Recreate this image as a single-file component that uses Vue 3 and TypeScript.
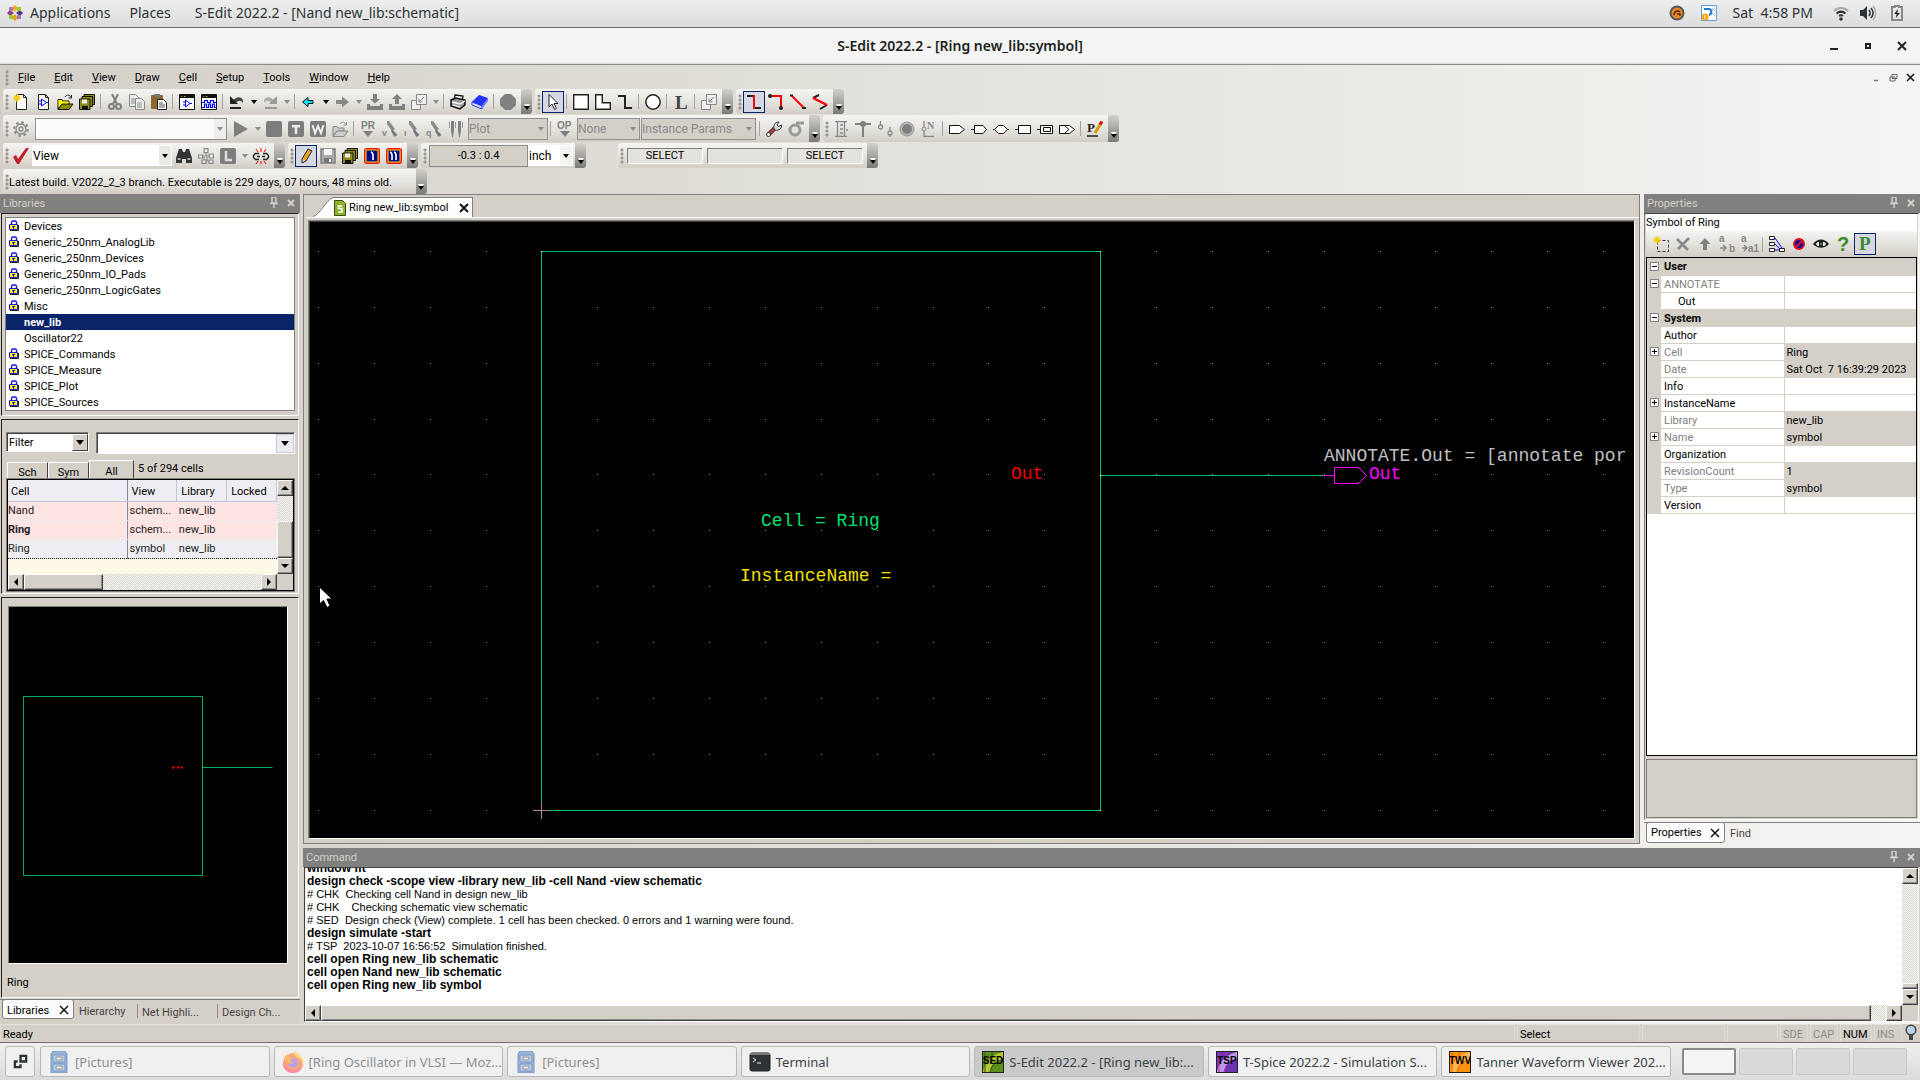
<script setup lang="ts">
import { computed, ref } from 'vue'

interface Item {
  kind: 'icon' | 'sep' | 'arrow' | 'combo' | 'field'
  icon?: string
  label?: string
  active?: boolean
  dim?: boolean
  size?: string
}
interface Bar { id: string; cls?: string; items: Item[] }

const i = (icon: string, label: string, active = false): Item => ({ kind: 'icon', icon, label, active })
const sep: Item = { kind: 'sep' }
const arr: Item = { kind: 'arrow', dim: true }
const arrOn: Item = { kind: 'arrow' }
const combo = (label: string, size: string, dim = false): Item => ({ kind: 'combo', label, size, dim })
const field = (label: string, size: string): Item => ({ kind: 'field', label, size })

const page = '<path d="M3.500.5h7l3 3v12h-10z" fill="#fff" stroke="#222"/><path d="M10.500.5v3h3" fill="none" stroke="#222"/>'
const buf = '<path d="M6.500 5v7l5-3.500z" fill="none" stroke="#00f"/><path d="M4 7h2M4 10h2M11.500 8.500h2" stroke="#00f"/>'
const star = '<path d="M4 0v8M0 4h8M1.500 1.500l5 5M6.500 1.500l-5 5" stroke="#f6d000" stroke-width="1.400"/>'
const floppies = '<path d="M5 .5h10.500v10H5z" fill="#8c8c1c" stroke="#111"/><path d="M3 2.500h10.500v10H3z" fill="#8c8c1c" stroke="#111"/><path d="M.5 5h10.500v10.500H.5z" fill="#8c8c1c" stroke="#111"/><path d="M3 5.500h5v4H3z" fill="#eee"/><path d="M3 12h6v3H3z" fill="#111"/>'
const win = '<path d="M.5.5h15v15H.5z" fill="#fff" stroke="#111"/><path d="M1 1h14v3H1z" fill="#111"/><path d="M2 2h1.500v1H2z" fill="#f33"/><path d="M5 2h1.500v1H5z" fill="#3e3"/>'
const folder = '<path d="M1 5.500h4l1 1.500h6v3H5l-4 5z"/><path d="M5 10h11l-4 5.500H1z"/>'
const probe = (c: string) => `<path d="M5 0l2 0 6 8-3 2-5-7z" fill="#8a8a8a"/><path d="M10 8l5.500 6-3 2-3.500-6z" fill="#777"/><text x="0" y="15" font-size="9" font-weight="bold" fill="#888" font-family="Liberation Sans, sans-serif">${c}</text>`
const tile = '<rect width="16" height="16" rx="2" fill="#7d7d7d"/>'
const lib = '<rect x=".7" y=".7" width="14.600" height="14.600" rx="2" fill="#fbe100" stroke="#f01010" stroke-width="1.400"/><rect x="2.500" y="2.500" width="11" height="11" fill="#000a8c"/>'
const txt = (s: string, x: number, y: number, size: number, fill: string, fam = 'Liberation Sans') =>
  `<text x="${x}" y="${y}" font-size="${size}" font-weight="bold" fill="${fill}" font-family="${fam}, sans-serif">${s}</text>`

const icons: Record<string, string> = {
  newDoc: page + star,
  newCell: page + buf,
  open: '<g fill="#8c8c00" stroke="#111">' + folder + '</g><path d="M1.500 6h3l1 1.500h6v2H5l-3.500 4z" fill="#ff0"/><path d="M8 3c2-3 5-2 6 .500M14.500 1v3h-3" fill="none" stroke="#222"/>',
  saveAll: floppies,
  cut: '<path d="M5 0l5 10M11 0L6 10" stroke="#808080" stroke-width="2"/><circle cx="4.500" cy="12.500" r="2.500" fill="none" stroke="#808080" stroke-width="2"/><circle cx="11.500" cy="12.500" r="2.500" fill="none" stroke="#808080" stroke-width="2"/>',
  copy: '<g fill="#eee" stroke="#8a8a8a"><path d="M.5.5h6l3 3v9h-9z"/><path d="M6.500 4.500h6l3 3v8h-9z"/></g><path d="M2 5h4M2 7h4M2 9h4M8 9h5M8 11h5M8 13h5" stroke="#8a8a8a"/>',
  paste: '<rect y="1" width="12" height="14" rx="1" fill="#8d6630"/><rect x="3" width="6" height="3" fill="#777"/><path d="M6.500 5.500h6l3 3v7h-9z" fill="#fff" stroke="#222"/><path d="M8 9h4M8 11h6M8 13h6" stroke="#555"/>',
  schem: win + '<path d="M6.500 6v7l4.500-3.500z" fill="none" stroke="#00f"/><path d="M4 8h2M4 11h2M11 9.500h2" stroke="#00f"/>',
  wave: win + '<path d="M1 8.500h2.500v-2h3v2h3v-2h3v2h2.500M1 13.500h2.500v-3.500h2v3.500h2v-3.500h2v3.500h2v-3.500h2v3.500h1.500" fill="none" stroke="#00f" stroke-width="1.200"/>',
  undo: '<path d="M4 7c3-5 9-5 10 0v2c-2-3-5-3-7 0z" fill="#444"/><path d="M1 2v8h8z" fill="#222"/><path d="M1 14h11" stroke="#222" stroke-width="2"/>',
  redo: '<path d="M12 7c-3-5-9-5-10 0v2c2-3 5-3 7 0z" fill="#aaa"/><path d="M15 2v8H7z" fill="#999"/><path d="M3 14h12" stroke="#999" stroke-width="2"/>',
  back: '<path d="M1.500 8l5.500-4.500v3h5v3H7v3z" fill="#00e5ff" stroke="#111"/>',
  fwd: '<path d="M15 8L8 2.500v3.500H2v4h6v3.500z" fill="#888"/>',
  down: '<path d="M6 0h4v5h3L8 9.500 3 5h3z" fill="#808080"/><path d="M0 10h3v2h10v-2h3v6H0z" fill="#808080"/>',
  up: '<path d="M6 10h4V5h3L8 0 3 5h3z" fill="#808080"/><path d="M0 10h3v2h10v-2h3v6H0z" fill="#808080"/>',
  instance: '<g fill="#eee" stroke="#888"><path d="M.5 6.500h9v9h-9z"/><path d="M5.500.5h10v10h-10z"/></g><path d="M13 3l-5 5M8 4.500V8h3.500" stroke="#888" fill="none"/>',
  print: '<path d="M5 1l8 1-1 5H4z" fill="#fff" stroke="#111" stroke-width="1.300"/><path d="M1 6l5-2 9 2v5l-5 4-9-3z" fill="#999" stroke="#111" stroke-width="1.500"/><path d="M2 8l8 2 5-3M3 11l7 2" stroke="#fff" fill="none" stroke-width="1.300"/>',
  book: '<path d="M7 1l9 3-6 8-10-4z" fill="#2233f5"/><path d="M0 8l10 4v3L0 11z" fill="#e6e6ff" stroke="#2233f5"/><path d="M10 12l6-8v3l-6 8z" fill="#6c78ff"/>',
  octagon: '<path d="M5 0h6l5 5v6l-5 5H5l-5-5V5z" fill="#808080"/>',
  cursor: '<path d="M4 .500v12.500l3-3 2.500 5.500 2-1L9 9.500h4z" fill="#fff" stroke="#222"/>',
  rect: '<path d="M.7.7h14.600v14.600H.7z" fill="#fff" stroke="#222" stroke-width="1.400"/>',
  poly: '<path d="M.7.7h6.600v8h8v6.600H.7z" fill="#fff" stroke="#222" stroke-width="1.400"/>',
  wire: '<path d="M1 2h7v12h7" fill="none" stroke="#222" stroke-width="2"/>',
  oval: '<circle cx="8" cy="8" r="7.200" fill="#fff" stroke="#222" stroke-width="1.500"/>',
  text: txt('L', 2, 15, 19, '#444', 'Liberation Serif'),
  wireZ: '<path d="M1 2h6M9 14h6" stroke="#222" stroke-width="2"/><path d="M8 1v14" stroke="#f00" stroke-width="2"/>',
  wireL: '<path d="M2 2h11v12" fill="none" stroke="#f00" stroke-width="2"/><circle cx="2" cy="2" r="2" fill="#222"/><circle cx="13" cy="14" r="2" fill="#222"/>',
  wireD: '<path d="M2 2l12 12" stroke="#f00" stroke-width="2"/><path d="M0 1.500h3M12 14h4" stroke="#222" stroke-width="2"/>',
  wireA: '<path d="M7 1L1 4M15 11l-7 4" stroke="#222" fill="none" stroke-width="2"/><path d="M1 4l14 7" stroke="#f00" stroke-width="2.500"/>',
  gear: '<circle cx="8" cy="8" r="5" fill="none" stroke="#8a8a8a" stroke-width="1.300"/><circle cx="8" cy="8" r="2" fill="none" stroke="#8a8a8a" stroke-width="1.300"/><circle cx="8" cy="8" r="6.700" fill="none" stroke="#8a8a8a" stroke-width="2.200" stroke-dasharray="2.600 2.660"/>',
  play: '<path d="M1 0l14 8-14 8z" fill="#808080"/>',
  stop: tile,
  tileT: tile + '<path d="M4 4h8v2.500H9.300V13H6.700V6.500H4z" fill="#eee"/>',
  tileW: tile + '<path d="M2.500 4L5 12l3-7 3 7 2.500-8" fill="none" stroke="#eee" stroke-width="2"/>',
  tileL: tile + '<path d="M6 3v9h6" fill="none" stroke="#ddd" stroke-width="2.500"/>',
  openOff: '<g fill="#ccc" stroke="#888">' + folder + '</g><path d="M8 3c2-3 5-2 6 .500M14.500 1v3h-3" fill="none" stroke="#888"/>',
  pr: txt('PR', 1, 8, 10, '#808080') + '<path d="M3 10h10l-5 6z" fill="#808080"/>',
  op: txt('OP', 0, 8, 10, '#808080') + '<path d="M3 10h10l-5 6z" fill="#808080"/>',
  probeV: probe('v'), probeI: probe('ı'), probeQ: probe('q'),
  forks: '<path d="M3 0h3v9l-1 7H4L3 9zM10 0h3v9l-1 7h-1l-1-7z" fill="#808080"/><path d="M1.500 1v6M7.500 1v6M14.500 1v6" stroke="#999"/>',
  wrench: '<path d="M3 13l6-6" stroke="#333" stroke-width="4.500"/><path d="M3 13l6-6" stroke="#c23848" stroke-width="2.500"/><path d="M8 8c-1-5 2-7 5-7l-2 3 1.500 1.500L15.500 4c1 3-3 6-6 5z" fill="#ddd" stroke="#333"/><circle cx="2.500" cy="13.500" r="2" fill="#fff" stroke="#333"/>',
  sigma: '<path d="M16 2H8" stroke="#999" stroke-width="3"/><circle cx="7" cy="9" r="5" fill="none" stroke="#999" stroke-width="3"/>',
  sheet: '<path d="M2 .7h12M2 15.300h12M4.500 1v14M11.500 1v14M7 4h3M7 8h3M7 12h3M13 9h2" stroke="#888" stroke-width="1.300"/>',
  tee: '<path d="M0 3h16M8 3v13" stroke="#808080" stroke-width="2"/><circle cx="8" cy="3" r="3" fill="#808080"/>',
  net: '<g fill="none" stroke="#888" stroke-width="1.300"><circle cx="3.500" cy="6" r="2"/><circle cx="13" cy="12" r="2"/><path d="M3.500 4V0M13 10V6M13 14v2"/></g>',
  disc: '<circle cx="8" cy="8" r="7" fill="#b8b8b8" stroke="#999"/><circle cx="8" cy="8" r="5" fill="#808080"/>',
  nlabel: txt('N', 6, 8, 10, '#888', 'Liberation Serif') + '<path d="M3 0v15.300h10" fill="none" stroke="#888" stroke-width="1.300"/><circle cx="3" cy="8" r="2" fill="#ddd" stroke="#888"/>',
  portA: '<path d="M.5 4.500h10l5 4-5 4H.5z" fill="#fff" stroke="#111"/>',
  portB: '<path d="M0 8.500h3M15.500 8.500L12 4.500H3.500v8H12z" fill="#fff" stroke="#111"/>',
  portC: '<path d="M0 8.500h16" stroke="#111"/><path d="M1.500 8.500l4-4h5l4 4-4 4h-5z" fill="#fff" stroke="#111"/>',
  portD: '<path d="M0 8.500h4M3.500 4.500h12v8h-12z" fill="#fff" stroke="#111"/>',
  portE: '<path d="M0 8.500h4M3.500 4.500h12v8h-12zM6.500 6.500h7v4h-7z" fill="#fff" stroke="#111"/>',
  portF: '<path d="M.5 4.500h10l5 4-5 4H.5z" fill="#fff" stroke="#111"/><path d="M6 5l4 3.500L6 12" fill="none" stroke="#111"/>',
  pEdit: txt('P', 0, 11, 13, '#222', 'Liberation Serif') + '<path d="M14 2L8 12" stroke="#d99a00" stroke-width="3"/><path d="M15 .500l-2 3" stroke="#d00" stroke-width="3"/><path d="M0 15h11" stroke="#222" stroke-width="1.500"/>',
  check: '<path d="M0 9l3-2 2 4L13 0h3L6 16H4z" fill="#c41e2e"/>',
  binoc: '<path d="M3 1h3l1 3h2l1-3h3l3 9v5h-6v-4H6v4H0v-5z" fill="#333"/><path d="M1.500 11h3M11.500 11h3" stroke="#aaa" stroke-width="2"/>',
  tree: '<g fill="#eee" stroke="#888" stroke-width="1.200"><path d="M6 .6h4v4H6zM.6 7h4v3h-4zM11.400 6h4v4h-4zM4 12h4v3.400H4zM11 12h4v3.400h-4z"/></g><path d="M8 5v3M5 8h6M6 9v3M9 9v4h2" fill="none" stroke="#888" stroke-width="1.200"/>',
  unlink: '<path d="M6 5.500H2.500l-2 2v2l2 2H6M10 5.500h3.500l2 2v2l-2 2H10M4 8.500h3M9 8.500h3" fill="none" stroke="#222" stroke-width="1.400"/><path d="M8 0v4M3 1l2 3M13 1l-2 3M8 13v3M5 13l-2 3M11 13l2 3" stroke="#f00"/>',
  pencil: '<path d="M12 2L6 12" stroke="#e8a51c" stroke-width="4"/><path d="M10 1L4 11l0 4 4-2 6-10z" fill="none" stroke="#222"/>',
  save: '<path d="M1 1h14v14H1z" fill="#aaa" stroke="#808080" stroke-width="1.500"/><path d="M4 1h8v6H4z" fill="#f4f4f4"/><path d="M4 10h8v5H4z" fill="#777"/><path d="M9 11h2v3H9z" fill="#eee"/>',
  lib1: lib + '<path d="M7 4c3 1 2 4 2 8" stroke="#fff" stroke-width="1.700" fill="none"/>',
  lib2: lib + '<path d="M4 4c3 1 2 4 2 8M8 4c3 1 2 4 2 8" stroke="#fff" stroke-width="1.700" fill="none"/>',
  lock: '<path d="M2.500 4V2l1-1h3l1 1v2" fill="none" stroke="#1a1ae0" stroke-width="1.400"/><path d="M.5 4.500h8v5h-8z" fill="#ff0" stroke="#1a1ae0"/><path d="M1 10.500h8.500V5" fill="none" stroke="#222"/><path d="M3 6.500h3M4.500 7v2" stroke="#1a1ae0"/>',
  addProp: '<path d="M4.500 4.500h11v11h-11z" fill="none" stroke="#333" stroke-dasharray="3 2"/>' + star,
  del: '<path d="M2 3l11 11M14 2L3 13" stroke="#888" stroke-width="2.600"/>',
  upGrey: '<path d="M8 2l5.500 6H10v6H6V8H2.500z" fill="#808080"/>',
  ab: txt('a', 0, 6, 10, '#888') + txt('b', 10, 16, 10, '#888') + '<path d="M1 12h5M4 9l3 3-3 3" stroke="#888" fill="none" stroke-width="1.500"/>',
  aa1: txt('a', 0, 6, 10, '#888') + txt('a1', 7, 16, 10, '#888') + '<path d="M1 12h4M3 9l3 3-3 3" stroke="#888" fill="none" stroke-width="1.500"/>',
  links: '<g fill="#fff" stroke="#222"><path d="M.5.5h5v3h-5zM.5 6.500h5v3h-5zM.5 12.500h5v3h-5zM10.500 12.500h5v3h-5z"/></g><path d="M6 2l7 10M6 8l5 5M6 14h4" stroke="#00f"/>',
  ban: '<circle cx="8" cy="8" r="5" fill="#10109a" stroke="#e01020" stroke-width="2"/><path d="M4 12l8-8" stroke="#e01020" stroke-width="2"/>',
  eye: '<path d="M0 8c4-6 12-6 16 0-4 5-12 5-16 0z" fill="#222"/><path d="M3 8c1-2 2-2 3-2v4c-1 0-2 0-3-2zM13 8c-1-2-2-2-3-2v4c1 0 2 0 3-2z" fill="#eee"/><circle cx="8" cy="8" r="1" fill="#5a5"/>',
  help: txt('?', 2, 15, 20, '#3f8a2c'),
  prop: txt('P', 2, 14, 19, '#3f8a2c', 'Liberation Serif'),
}

const rows: { cls: string; bars: Bar[] }[] = [
  { cls: '', bars: [
    { id: 'std', items: [i('newDoc', 'New'), i('newCell', 'New cell'), i('open', 'Open'), i('saveAll', 'Save all'), sep, i('cut', 'Cut'), i('copy', 'Copy'), i('paste', 'Paste'), sep, i('schem', 'Schematic'), i('wave', 'Waveform'), sep, i('undo', 'Undo'), arrOn, i('redo', 'Redo'), arr, sep, i('back', 'Back'), arrOn, i('fwd', 'Forward'), arr, i('down', 'Push'), i('up', 'Pop'), i('instance', 'Instance'), arr, sep, i('print', 'Print'), i('book', 'Manual'), sep, i('octagon', 'Stop')] },
    { id: 'draw', items: [i('cursor', 'Select', true), sep, i('rect', 'Box'), i('poly', 'Polygon'), i('wire', 'Path'), sep, i('oval', 'Circle'), sep, i('text', 'Label'), sep, i('instance', 'Instance')] },
    { id: 'seg', items: [i('wireZ', 'Z segment', true), i('wireL', 'L segment'), i('wireD', 'Diagonal'), i('wireA', 'Any angle')] },
  ] },
  { cls: 'tall', bars: [
    { id: 'sim', items: [i('gear', 'Setup simulation'), combo('', 'w-sim', true), i('play', 'Run'), arr, i('stop', 'Stop'), i('tileT', 'T-Spice'), i('tileW', 'Waveform viewer'), i('openOff', 'Open results'), sep, i('pr', 'Probe'), i('probeV', 'Voltage probe'), i('probeI', 'Current probe'), i('probeQ', 'Charge probe'), i('forks', 'Differential'), combo('Plot', 'w-plot', true), sep, i('op', 'Operating point'), combo('None', 'w-none', true), combo('Instance Params', 'w-params', true), sep, i('wrench', 'Tools'), i('sigma', 'Calculator')] },
    { id: 'ports', items: [i('sheet', 'Sheet'), i('tee', 'Junction'), i('net', 'Net'), i('disc', 'Solder point'), i('nlabel', 'Net label'), sep, i('portA', 'In port'), i('portB', 'Out port'), i('portC', 'InOut port'), i('portD', 'Other port'), i('portE', 'Global port'), i('portF', 'Flag port'), sep, i('pEdit', 'Edit property')] },
  ] },
  { cls: '', bars: [
    { id: 'check', items: [i('check', 'Check'), combo('View', 'w-view'), i('binoc', 'Find'), i('tree', 'Hierarchy'), i('tileL', 'Layers'), arr, i('unlink', 'Unlink')] },
    { id: 'edit', items: [i('pencil', 'Edit', true), i('save', 'Save'), i('saveAll', 'Save all'), i('lib1', 'Reload'), i('lib2', 'Reload all')] },
    { id: 'pos', items: [field('-0.3 : 0.4', 'w-pos'), combo('inch', 'w-unit')] },
    { id: 'mouse', cls: 'apart', items: [field('SELECT', 'w-key'), field('', 'w-key'), field('SELECT', 'w-key')] },
  ] },
]

const menus = ['File', 'Edit', 'View', 'Draw', 'Cell', 'Setup', 'Tools', 'Window', 'Help']
const libs = ['Devices', 'Generic_250nm_AnalogLib', 'Generic_250nm_Devices', 'Generic_250nm_IO_Pads', 'Generic_250nm_LogicGates', 'Misc', 'new_lib', 'Oscillator22', 'SPICE_Commands', 'SPICE_Measure', 'SPICE_Plot', 'SPICE_Sources']
const openLibs = ['new_lib', 'Oscillator22']
const activeLib = ref('new_lib')

const cells = [
  { name: 'Nand', view: 'schem...', lib: 'new_lib', cls: 'pink' },
  { name: 'Ring', view: 'schem...', lib: 'new_lib', cls: 'pink strong' },
  { name: 'Ring', view: 'symbol', lib: 'new_lib', cls: 'focus' },
]

interface Prop { name: string; value?: string; box?: string; head?: boolean; dim?: boolean; ro?: boolean; sub?: boolean }
const props: Prop[] = [
  { name: 'User', head: true, box: '-' },
  { name: 'ANNOTATE', dim: true, box: '-' },
  { name: 'Out', sub: true },
  { name: 'System', head: true, box: '-' },
  { name: 'Author' },
  { name: 'Cell', value: 'Ring', dim: true, ro: true, box: '+' },
  { name: 'Date', value: 'Sat Oct  7 16:39:29 2023', dim: true, ro: true },
  { name: 'Info' },
  { name: 'InstanceName', box: '+' },
  { name: 'Library', value: 'new_lib', dim: true, ro: true },
  { name: 'Name', value: 'symbol', dim: true, ro: true, box: '+' },
  { name: 'Organization' },
  { name: 'RevisionCount', value: '1', dim: true, ro: true },
  { name: 'Type', value: 'symbol', dim: true, ro: true },
  { name: 'Version' },
]
const propTools: Item[] = [i('addProp', 'Add property'), i('del', 'Delete'), i('upGrey', 'Up'), i('ab', 'Rename'), i('aa1', 'Renumber'), sep, i('links', 'Links'), i('ban', 'Reset'), i('eye', 'Visibility'), i('help', 'Help'), i('prop', 'Properties', true)]

const log = [
  { t: 'window fit', b: true },
  { t: 'design check -scope view -library new_lib -cell Nand -view schematic', b: true },
  { t: '# CHK  Checking cell Nand in design new_lib' },
  { t: '# CHK    Checking schematic view schematic' },
  { t: '# SED  Design check (View) complete. 1 cell has been checked. 0 errors and 1 warning were found.' },
  { t: 'design simulate -start', b: true },
  { t: '# TSP  2023-10-07 16:56:52  Simulation finished.' },
  { t: 'cell open Ring new_lib schematic', b: true },
  { t: 'cell open Nand new_lib schematic', b: true },
  { t: 'cell open Ring new_lib symbol', b: true },
]

const tasks = [
  { icon: 'cabinet', label: '[Pictures]', dim: true },
  { icon: 'fox', label: '[Ring Oscillator in VLSI — Moz...', dim: true },
  { icon: 'cabinet', label: '[Pictures]', dim: true },
  { icon: 'term', label: 'Terminal' },
  { icon: 'sed', label: 'S-Edit 2022.2 - [Ring new_lib:...', on: true },
  { icon: 'tsp', label: 'T-Spice 2022.2 - Simulation S...' },
  { icon: 'twv', label: 'Tanner Waveform Viewer 202...' },
]
const badge = (t: string, a: string, b: string, c: string) =>
  `<rect x=".5" y=".5" width="21" height="21" fill="${a}" stroke="#222"/><path d="M1 21C3 10 10 4 21 1v7C12 10 9 14 8 21z" fill="${b}"/><path d="M8 21C10 13 14 10 21 9M3 1v20M10 1v8" fill="none" stroke="${c}"/><text x="11" y="13" text-anchor="middle" font-size="10" font-weight="bold" fill="#000" font-family="Liberation Sans Narrow, Liberation Sans, sans-serif">${t}</text>`
const taskIcons: Record<string, string> = {
  cabinet: '<path d="M3 3l2-3h12l2 3v19H3z" fill="#92aed6" stroke="#6d8fc2"/><path d="M5 4h12v7H5zM5 13h12v7H5z" fill="#b6cbe8" stroke="#6d8fc2"/><path d="M8 6h6v3H8zM8 15h6v3H8z" fill="#e9e9e0" stroke="#8b9098"/>',
  fox: '<circle cx="11" cy="12" r="10" fill="#ff9d6a"/><path d="M11 22A10 10 0 0 1 1 10c1 6 5 9 12 9 5 0 7-3 8-7 0 6-4 10-10 10z" fill="#ff7f9a"/><path d="M13 0c5 3 9 7 8 13-1-4-3-6-7-7-2-2-2-4-1-6z" fill="#ffd97a"/><circle cx="11" cy="12" r="5" fill="#b49be8"/><path d="M2 7l3-4 2 3 4 0-3 4 4 2-5 1z" fill="#ffb35c"/>',
  term: '<rect x="1" y="2" width="20" height="18" rx="2" fill="#2e3436" stroke="#1d2122"/><rect x="1" y="2" width="20" height="2" fill="#777"/><path d="M4 7l3 2-3 2M8 12h4" fill="none" stroke="#eee"/>',
  sed: badge('SED', '#5d8f1c', '#b9c832', '#2c5a10'),
  tsp: badge('TSP', '#6a35b0', '#b99be0', '#d020c0'),
  twv: badge('TWV', '#ff9010', '#ffb650', '#e06000'),
}

// Snap grid of the symbol editor, one dot per major grid step
const pitch = 55.87
const dots = computed(() => {
  const out: { x: number; y: number }[] = []
  for (let r = 0; r < 11; r++) for (let c = 0; c < 24; c++) out.push({ x: Math.round(8 + c * pitch), y: Math.round(29 + r * pitch) })
  return out
})
</script>

<template>
  <div class="desktop">
    <header class="topbar">
      <svg class="distro" viewBox="0 0 16 16"><path d="M8 0l3 3-3 4-3-4z" fill="#efa724" /><path d="M16 8l-3 3-4-3 4-3z" fill="#4a3a8c" /><path d="M8 16l-3-3 3-4 3 4z" fill="#e6a020" /><path d="M0 8l3-3 4 3-4 3z" fill="#9a3a8c" /><path d="M2 2h4v4H2zM10 10h4v4h-4z" fill="#a878b8" /><path d="M10 2h4v4h-4zM2 10h4v4H2z" fill="#9ccd2a" /></svg>
      <a href="#" class="apps">Applications</a>
      <a href="#" class="places">Places</a>
      <a href="#">S-Edit 2022.2 - [Nand new_lib:schematic]</a>
      <span class="grow"></span>
      <svg class="tray" viewBox="0 0 16 16"><circle cx="8" cy="8" r="7.500" fill="#555" /><circle cx="8" cy="8" r="5.500" fill="#e8862a" /><path d="M5 10c0-4 4-5 6-3M8 9h3v2" fill="none" stroke="#5a2a10" stroke-width="1.500" /></svg>
      <svg class="tray second" viewBox="0 0 16 16"><path d="M.5.5h15v15H.5z" fill="#fff" stroke="#5aa0e8" /><path d="M3 4h5c3 0 3 5 0 6" fill="none" stroke="#2878d0" stroke-width="2" /><path d="M11 3l3 3M11 8l3 3M14 3l-3 3" stroke="#88b8f0" /><circle cx="4" cy="12" r="3.500" fill="#f8a800" /><path d="M4 10v4" stroke="#fff" /></svg>
      <time>Sat&nbsp; 4:58 PM</time>
      <svg class="tray wifi" viewBox="0 0 16 16"><path d="M1 6c4-4 10-4 14 0" fill="none" stroke="#aaa" stroke-width="2" /><path d="M3.500 8.500c3-2.500 6-2.500 9 0M6 11c1.500-1 2.500-1 4 0" fill="none" stroke="#2e3436" stroke-width="2" /><circle cx="8" cy="14" r="1.800" fill="#2e3436" /></svg>
      <svg class="tray vol" viewBox="0 0 16 16"><path d="M0 5h3l4-4v14l-4-4H0z" fill="#2e3436" /><path d="M9 5c1.500 2 1.500 4 0 6M11 3c2.500 3 2.500 7 0 10" fill="none" stroke="#2e3436" stroke-width="1.500" /><path d="M13 1c3.500 4 3.500 10 0 14" fill="none" stroke="#aaa" stroke-width="1.500" /></svg>
      <svg class="tray batt" viewBox="0 0 16 16"><path d="M3 2h3V1h4v1h3v13H3z" fill="none" stroke="#888" stroke-width="2" /><path d="M9 4L5 9h2.500L7 13l4-5H8.500z" fill="#2e3436" /></svg>
    </header>

    <div class="titlebar">
      <h1>S-Edit 2022.2 - [Ring new_lib:symbol]</h1>
      <div class="winctl">
        <button aria-label="Minimize"><svg viewBox="0 0 10 10"><path d="M1 8h8" stroke="#222" stroke-width="2" /></svg></button>
        <button aria-label="Maximize"><svg viewBox="0 0 10 10"><path d="M3 3h4v4H3z" fill="none" stroke="#222" stroke-width="2" /></svg></button>
        <button aria-label="Close"><svg viewBox="0 0 10 10"><path d="M1 1l8 8M9 1L1 9" stroke="#222" stroke-width="2" /></svg></button>
      </div>
    </div>

    <main class="app">
      <nav class="menubar">
        <span class="grip"></span>
        <button v-for="m in menus" :key="m"><u>{{ m[0] }}</u>{{ m.slice(1) }}</button>
        <span class="grow"></span>
        <div class="mdi">
          <button aria-label="Minimize document"><svg viewBox="0 0 9 9"><path d="M2 7.500h4" stroke="#777" stroke-width="1.500" /></svg></button>
          <button aria-label="Restore document"><svg viewBox="0 0 9 9"><path d="M3 1.500h5v4H3zM1 4h5v4H1z" fill="none" stroke="#666" /></svg></button>
          <button aria-label="Close document"><svg viewBox="0 0 9 9"><path d="M1 1l7 7M8 1L1 8" stroke="#111" stroke-width="1.500" /></svg></button>
        </div>
      </nav>

      <div class="bars">
        <div v-for="(row, ri) in rows" :key="ri" class="barrow" :class="row.cls">
          <div v-for="bar in row.bars" :key="bar.id" class="bar" :class="[bar.cls, bar.id]">
            <span class="grip"></span>
            <template v-for="(it, k) in bar.items" :key="k">
              <button v-if="it.kind === 'icon'" class="tool" :class="{ active: it.active }" :aria-label="it.label">
                <svg viewBox="0 0 16 16" v-html="icons[it.icon!]"></svg>
              </button>
              <span v-else-if="it.kind === 'sep'" class="sep"></span>
              <button v-else-if="it.kind === 'arrow'" class="drop" :class="{ dim: it.dim }" aria-label="More"><i></i></button>
              <span v-else-if="it.kind === 'combo'" class="combo" :class="[it.size, { dim: it.dim }]">
                <select :aria-label="it.label || 'Simulation'"><option>{{ it.label }}</option></select><span class="cbtn"><i></i></span>
              </span>
              <output v-else class="field" :class="it.size">{{ it.label }}</output>
            </template>
            <button class="over" aria-label="Toolbar options"><i></i></button>
          </div>
        </div>
        <div class="barrow">
          <div class="bar build"><span class="grip"></span><span class="note">Latest build. V2022_2_3 branch. Executable is 229 days, 07 hours, 48 mins old.</span><button class="over" aria-label="Toolbar options"><i></i></button></div>
        </div>
      </div>

      <div class="docks">
        <aside class="left">
          <div class="caption"><h2>Libraries</h2><svg class="pin" viewBox="0 0 8 12"><path d="M2 0h4v6H2zM0 6.500h8M4 7v4" fill="none" stroke="#d4d0c8" stroke-width="1.500" /></svg><svg class="x" viewBox="0 0 8 8"><path d="M1 1l6 6M7 1L1 7" stroke="#d4d0c8" stroke-width="2" /></svg></div>
          <section class="group">
            <ul class="liblist">
              <li v-for="l in libs" :key="l" :class="{ sel: l === activeLib }" @click="activeLib = l">
                <svg viewBox="0 0 10 11"><g v-if="!openLibs.includes(l)" v-html="icons.lock"></g></svg>{{ l }}
              </li>
            </ul>
          </section>
          <section class="group mid">
            <div class="filters">
              <span class="combo classic"><select aria-label="Filter kind"><option>Filter</option></select><span class="cbtn"><i></i></span></span>
              <span class="combo wide"><input type="text" aria-label="Filter text" /><span class="cbtn"><i></i></span></span>
            </div>
            <div class="celltabs">
              <button>Sch</button><button>Sym</button><button class="on">All</button><span>5 of 294 cells</span>
            </div>
            <div class="cellbox">
              <div class="cellmain">
                <div class="cellscroll">
                  <table>
                    <thead><tr><th>Cell</th><th>View</th><th>Library</th><th>Locked</th></tr></thead>
                    <tbody><tr v-for="(c, k) in cells" :key="k" :class="c.cls"><td>{{ c.name }}</td><td>{{ c.view }}</td><td>{{ c.lib }}</td><td></td></tr></tbody>
                  </table>
                </div>
                <div class="vsb"><button class="sb up" aria-label="Up"><i></i></button><span class="tr a"></span><span class="thumb"></span><button class="sb dn" aria-label="Down"><i></i></button></div>
              </div>
              <div class="hsb"><button class="sb lt" aria-label="Left"><i></i></button><span class="thumb"></span><span class="tr"></span><button class="sb rt" aria-label="Right"><i></i></button><span class="corner"></span></div>
            </div>
          </section>
          <section class="group preview">
            <svg class="thumbnail"><path d="M14.500 89.500h179v179h-179zM193.500 160.500h70" fill="none" stroke="#00b060" /><path d="M163 160.500h3M168 160.500h3M172 160.500h2" stroke="#d00000" stroke-width="2" /></svg>
            <p>Ring</p>
          </section>
          <div class="tabs">
            <button class="on">Libraries <svg viewBox="0 0 10 10"><path d="M1 1l8 8M9 1L1 9" stroke="#111" stroke-width="1.500" /></svg></button>
            <button class="t1">Hierarchy</button><button class="t2">Net Highli...</button><button class="t3">Design Ch...</button>
          </div>
        </aside>

        <div class="rest">
          <div class="upper">
            <section class="doc">
              <div class="doctabs">
                <svg class="slant" viewBox="0 0 20 20"><path d="M0 20C6 19 13 4 20 .5V20z" fill="#fff" /><path d="M0 19.500C6 19 13 3 20 .5" fill="none" stroke="#808080" /></svg>
                <button><svg class="sico" viewBox="0 0 14 16"><path d="M1.500.5h8l3 3v12h-11z" fill="#8db52a" stroke="#3a4a10" /><path d="M9 6H5.500v2.500H9V12H5" stroke="#fff" fill="none" stroke-width="1.500" /></svg>Ring new_lib:symbol<svg class="tx" viewBox="0 0 10 10"><path d="M1 1l8 8M9 1L1 9" stroke="#111" stroke-width="2" /></svg></button>
              </div>
              <div class="stage">
                <svg class="canvas">
                  <rect v-for="(d, k) in dots" :key="k" :x="d.x" :y="d.y" width="1" height="1" fill="#8c8c8c" />
                  <path d="M231.500 29.500h559v559h-559zM790.500 253.500h223" fill="none" stroke="#00c465" />
                  <path d="M231.500 581v16M223 588.500h16" stroke="#b88a8a" />
                  <path d="M231 29h1v1h-1zM790 29h1v1h-1zM790 588h1v1h-1zM790 253h1v1h-1z" fill="#fff" />
                  <path d="M1014 253.500h10M1024.500 245.500h24l8 8-8 8h-24z" fill="none" stroke="#f0f" />
                  <text x="701" y="257" fill="#f00000">Out</text>
                  <text x="1059" y="257" fill="#f0f">Out</text>
                  <text x="1014" y="239" fill="#c0c0c0">ANNOTATE.Out = [annotate por</text>
                  <text x="451" y="304" fill="#00e070">Cell = Ring</text>
                  <text x="430" y="359" fill="#f0e000">InstanceName =</text>
                  <path d="M9.500 365v17l4-3.500 3.500 7 3-1.500-3-7h5z" fill="#fff" stroke="#000" />
                </svg>
              </div>
            </section>

            <aside class="props">
              <div class="caption"><h2>Properties</h2><svg class="pin" viewBox="0 0 8 12"><path d="M2 0h4v6H2zM0 6.500h8M4 7v4" fill="none" stroke="#d4d0c8" stroke-width="1.500" /></svg><svg class="x" viewBox="0 0 8 8"><path d="M1 1l6 6M7 1L1 7" stroke="#d4d0c8" stroke-width="2" /></svg></div>
              <div class="pbody">
                <input class="target" type="text" aria-label="Selected object" value="Symbol of Ring" readonly />
                <div class="ptools">
                  <template v-for="(it, k) in propTools" :key="k">
                    <button v-if="it.kind === 'icon'" class="tool" :class="{ active: it.active }" :aria-label="it.label"><svg viewBox="0 0 16 16" v-html="icons[it.icon!]"></svg></button>
                    <span v-else class="sep"></span>
                  </template>
                </div>
                <div class="pgrid">
                  <table>
                    <colgroup><col class="c-gut" /><col class="c-name" /><col /></colgroup>
                    <tbody>
                      <tr v-for="p in props" :key="p.name" :class="{ head: p.head, dim: p.dim, ro: p.ro, sub: p.sub }">
                        <td class="gut"><svg v-if="p.box" viewBox="0 0 9 9"><path d="M.5.5h8v8h-8z" fill="#fff" stroke="#808080" /><path :d="p.box === '+' ? 'M2 4.500h5M4.500 2v5' : 'M2 4.500h5'" stroke="#000" /></svg></td>
                        <td v-if="p.head" class="name" colspan="2">{{ p.name }}</td>
                        <template v-else><td class="name">{{ p.name }}</td><td class="val">{{ p.value }}</td></template>
                      </tr>
                    </tbody>
                  </table>
                </div>
                <div class="pdesc"></div>
              </div>
              <div class="tabs">
                <button class="on">Properties <svg viewBox="0 0 10 10"><path d="M1 1l8 8M9 1L1 9" stroke="#111" stroke-width="1.500" /></svg></button>
                <button class="find">Find</button>
              </div>
            </aside>
          </div>

          <section class="command">
            <div class="caption"><h2>Command</h2><svg class="pin" viewBox="0 0 8 12"><path d="M2 0h4v6H2zM0 6.500h8M4 7v4" fill="none" stroke="#d4d0c8" stroke-width="1.500" /></svg><svg class="x" viewBox="0 0 8 8"><path d="M1 1l6 6M7 1L1 7" stroke="#d4d0c8" stroke-width="2" /></svg></div>
            <div class="cbody">
              <div class="cmain">
                <div class="log"><div class="loginner"><p v-for="(l, k) in log" :key="k" :class="{ b: l.b }">{{ l.t }}</p></div></div>
                <div class="vsb"><button class="sb up" aria-label="Up"><i></i></button><span class="tr"></span><span class="thumb"></span><button class="sb dn" aria-label="Down"><i></i></button></div>
              </div>
              <div class="hsb"><button class="sb lt" aria-label="Left"><i></i></button><span class="thumb"></span><span class="tr"></span><button class="sb rt" aria-label="Right"><i></i></button><span class="corner"></span></div>
            </div>
          </section>
        </div>
      </div>
    </main>

    <footer class="status">
      <span class="grow">Ready</span><span class="s1">Select</span><span class="s2"></span><span class="s3"></span>
      <span class="k off">SDE</span><span class="k off">CAP</span><span class="k num">NUM</span><span class="k off">INS</span>
      <svg viewBox="0 0 12 18"><circle cx="6" cy="6" r="4.800" fill="#b9d0ea" stroke="#444" stroke-width="1.500" /><path d="M4 11h4v5H4z" fill="#444" /></svg>
    </footer>

    <nav class="taskbar">
      <button class="show" aria-label="Show desktop"><svg viewBox="0 0 16 16"><path d="M8 2h6v6H8z" fill="none" stroke="#2e3436" stroke-width="2.500" /><path d="M5 8H2v6h6v-3" fill="none" stroke="#2e3436" stroke-width="2.500" /></svg></button>
      <div class="tasks">
        <button v-for="(t, k) in tasks" :key="k" class="task" :class="{ dim: t.dim, on: t.on }"><svg viewBox="0 0 22 22" v-html="taskIcons[t.icon]"></svg><span>{{ t.label }}</span></button>
      </div>
      <div class="spaces"><button v-for="n in 4" :key="n" :class="{ on: n === 1 }" :aria-label="'Workspace ' + n"></button></div>
    </nav>
  </div>
</template>

<style>
html, body { background: #d4d0c8; overflow: hidden; }
</style>

<style scoped>
* { box-sizing: border-box; }
h1, h2, p, ul { margin: 0; padding: 0; font-weight: normal; }
button, select, input { font: inherit; color: inherit; border: 0; padding: 0; margin: 0; background: none; }
svg { flex: none; display: block; }
i { display: block; width: 0; height: 0; border: 3px solid transparent; }
.grow { flex: 1; }
.desktop { height: 100vh; display: flex; flex-direction: column; font: 11px/16px Roboto, "Liberation Sans", sans-serif; color: #000; }

.topbar { height: 28px; flex: none; display: flex; align-items: center; padding: 0 15px 2px 7px; background: linear-gradient(#eee, #dcdcdc); border-bottom: 1px solid #6e6e6e; font: 14px/20px "Noto Sans", sans-serif; color: #2e3436; }
.topbar a { color: inherit; text-decoration: none; }
.distro { width: 16px; height: 16px; margin-right: 7px; }
.apps { margin-right: 19px; }
.places { margin-right: 24px; }
.tray { width: 16px; height: 16px; }
.second { margin: 0 16px; }
.wifi { margin-left: 20px; }
.vol { margin: 0 13px 0 11px; }

.titlebar { height: 37px; flex: none; display: flex; align-items: center; justify-content: center; position: relative; background: #f4f4f4; border-bottom: 1px solid #8c8c88; box-shadow: inset 0 -1px #dcdcdc; }
h1 { font: 600 14px/20px "Noto Sans", sans-serif; color: #1c1f20; }
.winctl { position: absolute; right: 13px; top: 13px; display: flex; gap: 24px; }
.winctl svg { width: 10px; height: 10px; }

.app { flex: 1; min-height: 0; display: flex; flex-direction: column; background: linear-gradient(90deg, #d4d0c8, #f5f4f2); }
.menubar { height: 24px; flex: none; display: flex; align-items: center; padding: 1px 5px 0 3px; }
.menubar > button { margin-left: 8px; margin-right: 11px; }
.mdi { display: flex; gap: 8px; }
.mdi svg { width: 9px; height: 9px; }
.grip { width: 7px; height: 16px; flex: none; background: radial-gradient(circle at 4px 2px, #9a978f 1px, transparent 2px) 0 0 / 7px 4px; }

.bars { display: flex; flex-direction: column; gap: 1px; flex: none; padding-left: 3px; }
.barrow { height: 25px; display: flex; gap: 3px; }
.barrow.tall { height: 27px; }
.bar { display: flex; align-items: center; border-radius: 3px; background: linear-gradient(#f5f4f2, #e6e4df 50%, #d2cec6); }
.apart { margin-left: 29px; }
.tool { width: 22px; height: 22px; display: flex; align-items: center; justify-content: center; flex: none; }
.tool svg { width: 16px; height: 16px; overflow: visible; }
.tool.active { border: 1px solid #0a246a; background: #d5d8e2; }
.sep { width: 6px; height: 15px; flex: none; background: linear-gradient(#a5a29a, #a5a29a) 2px 0 / 1px 100% no-repeat; }
.drop { width: 11px; height: 22px; display: flex; align-items: center; justify-content: center; }
.drop i, .cbtn i { border-top: 4px solid #000; border-bottom: 0; }
.drop.dim i, .combo.dim .cbtn i { border-top-color: #8c8c8c; }
.over { align-self: stretch; width: 11px; margin-left: 2px; display: flex; align-items: flex-end; justify-content: center; padding-bottom: 4px; border-radius: 0 3px 3px 0; background: linear-gradient(#d4d1cb, #7c7a76); }
.over i { border-top: 4px solid #000; border-bottom: 0; filter: drop-shadow(0 -2px #fff); }
.combo { position: relative; display: flex; background: #fff; flex: none; }
.combo select, .combo input { flex: 1; min-width: 0; appearance: none; padding-left: 2px; outline: none; border-radius: 0; }
.cbtn { position: absolute; right: 0; top: 0; bottom: 0; width: 12px; display: flex; align-items: center; justify-content: center; pointer-events: none; background: #ebe9e4; }
.bar .combo { height: 21px; font-size: 12px; }
.bar .combo select { padding-left: 0; }
.bar .combo.dim { height: 22px; border: 1px solid #909090; color: #8a8a8a; background: #d4d0c8; }
.bar .combo.dim .cbtn { background: none; }
.bar .combo.w-sim { width: 192px; margin: 0 3px; background: #fbfbfb; }
.bar .combo.w-sim .cbtn { background: #eeedea; }
.w-plot { width: 80px; margin-left: 1px; }
.w-none { width: 63px; margin: 0 1px; }
.w-params { width: 115px; margin-right: 1px; }
.w-view { width: 140px; margin-right: 1px; border: 1px solid #fff; }
.w-unit { width: 45px; border: 1px solid #fff; }
.w-unit .cbtn { background: #f4f3f0; }
.field { display: flex; align-items: center; justify-content: center; }
.w-pos { width: 99px; height: 22px; margin-left: 1px; border: 1px solid #8c8c8c; background: #d4d0c8; }
.w-key { width: 76px; height: 16px; margin: 0 2px; border: 1px solid; border-color: #808080 #fff #fff #808080; background: #e4e2dd; }
.note { margin: 2px 22px 0 -1px; }

.docks { flex: 1; min-height: 0; display: flex; gap: 3px; }
.left { width: 300px; flex: none; display: flex; flex-direction: column; background: #d4d0c8; }
.caption { height: 19px; flex: none; display: flex; align-items: center; background: #808080; color: #d4d0c8; padding: 0 5px 1px 3px; }
.caption h2 { flex: 1; font-size: 11px; padding-top: 1px; }
.pin { width: 8px; height: 12px; margin-right: 9px; }
.x { width: 8px; height: 8px; }
.group { flex: none; display: flex; flex-direction: column; margin: 0 1px 3px; padding: 3px 3px 4px 3px; border: 1px solid; border-color: #222 #fff #fff #222; }
.liblist { list-style: none; background: #fff; border: 1px solid #808080; }
.liblist li { height: 16px; padding-top: 2px; display: flex; align-items: center; white-space: nowrap; }
.liblist svg { width: 10px; height: 11px; margin: -3px 5px 0 3px; }
.liblist .sel { background: #0a246a; color: #fff; font-weight: bold; }
.mid { padding: 12px 3px 1px 4px; }
.filters { display: flex; gap: 7px; height: 22px; align-items: flex-start; }
.group select { padding-top: 1px; }
.combo.classic { width: 83px; height: 20px; border: 1px solid; border-color: #808080 #fff #fff #808080; box-shadow: inset 1px 1px #404040; }
.classic .cbtn { width: 16px; top: 1px; background: #d4d0c8; border: 1px solid; border-color: #fff #404040 #404040 #fff; }
.classic i, .wide i { border-width: 5px 4px 0; }
.combo.wide { flex: 1; height: 22px; border: 1px solid; border-color: #808080 #fff #fff #808080; box-shadow: inset 1px 1px #404040; }
.combo input { width: 100%; }
.wide .cbtn { width: 18px; top: 1px; background: #ececf2; border: 1px solid #c8c8dc; }
.celltabs { display: flex; align-items: flex-end; height: 18px; margin-top: 6px; padding-left: 1px; }
.celltabs button { width: 41px; height: 16px; line-height: 14px; padding-top: 3px; border: 1px solid; border-color: #fff #404040 transparent #fff; border-bottom: 0; overflow: visible; }
.celltabs .on { width: 45px; height: 18px; padding-top: 4px; }
.celltabs span { margin-left: 4px; padding-top: 1px; align-self: flex-start; }
.cellbox { border: 1px solid #000; outline: 1px solid #808080; background: #fff8e6; margin: 1px; }
.cellmain { display: flex; height: 94px; }
.cellscroll { flex: 1; min-width: 0; }
table { border-collapse: collapse; table-layout: fixed; width: 100%; }
th { font-weight: normal; text-align: left; }
th, td { padding: 0; white-space: nowrap; overflow: hidden; }
.cellscroll th { height: 21px; background: #eeeef2; padding: 3px 0 0 4px; border-right: 1px solid #c4c4dc; border-bottom: 1px solid #c4c4dc; }
.cellscroll th:first-child { width: 119px; border-right-color: #8088a8; padding-left: 3px; }
.cellscroll td { height: 19px; padding-left: 2px; border-bottom: 1px solid #efeaea; color: #222; }
.cellscroll td:first-child { border-right: 1px solid #8088a8; padding-left: 0; }
.pink td { background: #ffe4e4; }
.strong td:first-child { font-weight: bold; }
.cellscroll .focus td { background: #eeeef2; border-top: 1px dotted #000; border-bottom: 1px dotted #000; }

.sb, .thumb { background: #d4d0c8; border: 1px solid; border-color: #fff #404040 #404040 #fff; flex: none; box-shadow: inset -1px -1px #8c8c88; }
.sb { width: 16px; height: 16px; display: flex; align-items: center; justify-content: center; }
.tr { flex: 1; background: repeating-conic-gradient(#fff 0 25%, #d4d0c8 0 50%) 0 0 / 2px 2px; }
.vsb { width: 16px; flex: none; display: flex; flex-direction: column; }
.hsb { height: 16px; display: flex; }
.hsb .corner { width: 16px; background: #d4d0c8; }
.up i { border-width: 0 4px 4px; border-bottom-color: #000; }
.dn i { border-width: 4px 4px 0; border-top-color: #000; }
.lt i { border-width: 4px 4px 4px 0; border-right-color: #000; }
.rt i { border-width: 4px 0 4px 4px; border-left-color: #000; }
.cellmain .thumb { height: 37px; }
.cellbox .hsb .thumb { width: 79px; }

.preview { flex: 1; min-height: 0; padding: 8px 10px 0 6px; margin-bottom: 0; }
.thumbnail { flex: 1; min-height: 0; width: 100%; background: #000; border: 1px solid; border-color: #808080 #fff #fff #808080; }
.preview p { height: 33px; line-height: 38px; margin-left: -1px; }
.tabs { height: 25px; flex: none; display: flex; align-items: flex-start; border-top: 1px solid #808080; color: #444; margin-top: 1px; }
.tabs button { height: 20px; padding-top: 3px; display: flex; align-items: center; }
.tabs .on { color: #000; background: #fcfcfc; border: 1px solid #808080; border-radius: 3px; padding: 3px 4px 0; margin-left: 2px; margin-top: -1px; width: 72px; justify-content: space-between; }
.tabs .on svg { width: 10px; height: 10px; margin-top: -2px; }
.tabs .t1 { padding-left: 5px; width: 63px; }
.tabs .t2, .tabs .t3 { padding-left: 4px; width: 80px; height: 14px; margin-top: 4px; border-left: 1px solid #909090; }

.rest { flex: 1; min-width: 0; display: flex; flex-direction: column; gap: 4px; }
.upper { flex: 1; min-height: 0; display: flex; gap: 4px; }
.doc { flex: 1; min-width: 0; display: flex; flex-direction: column; border: 1px solid #808080; background: #d4d0c8; }
.doctabs { height: 23px; display: flex; align-items: flex-end; padding-left: 7px; margin-left: 2px; border-bottom: 1px solid #fff; }
.slant { width: 20px; height: 20px; }
.doctabs button { height: 20px; width: 140px; padding-top: 1px; display: flex; align-items: center; background: #fff; border: 1px solid #808080; border-width: 1px 1px 0 0; }
.sico { width: 14px; height: 16px; margin: 0 2px 0 0; }
.tx { width: 10px; height: 10px; margin-left: auto; margin-right: 3px; }
.stage { flex: 1; min-height: 0; display: flex; margin: 2px 4px 4px; border: 1px solid; border-color: #808080 #fff #fff #808080; }
.canvas { flex: 1; min-width: 0; background: #000; border: 1px solid; border-color: #404040 #000 #000 #404040; font: 18px "Liberation Mono", monospace; }
.canvas text { white-space: pre; }

.props { width: 276px; flex: none; display: flex; flex-direction: column; }
.pbody { flex: 1; min-height: 0; display: flex; flex-direction: column; background: #d4d0c8; border: 1px solid; border-color: #404040 #fff #fff #808080; padding: 0 1px 1px; margin-right: 1px; }
.target { height: 17px; background: #fff; width: 100%; outline: none; }
.ptools { height: 26px; flex: none; display: flex; align-items: center; padding-left: 4px; background: linear-gradient(#f5f4f2, #d2cec6); }
.pgrid { flex: 1; min-height: 0; background: #fff; border: 1px solid #000; }
.pgrid td { height: 17px; line-height: 14px; padding-top: 2px; border-bottom: 1px solid #d4d0c8; }
.c-gut { width: 14px; }
.c-name { width: 123px; }
.pgrid .gut { background: #d4d0c8; padding-top: 0; }
.gut svg { width: 9px; height: 9px; margin-left: 3px; }
.name { padding-left: 3px; border-right: 1px solid #d4d0c8; }
.val { padding-left: 2px; white-space: pre; }
.head .name { background: #d4d0c8; font-weight: bold; }
.dim .name { color: #808080; }
.sub .name { padding-left: 17px; }
.ro .val { background: #d4d0c8; }
.pdesc { height: 59px; flex: none; margin-top: 3px; border: 1px solid #808080; }
.props .tabs { height: 22px; margin-top: 2px; }
.props .tabs button { padding-top: 1px; }
.props .tabs .on { width: 79px; height: 21px; }
.props .tabs .on svg { margin-top: -1px; }
.find { padding-left: 5px; }

.command { height: 174px; flex: none; display: flex; flex-direction: column; margin-bottom: 2px; background: #d4d0c8; }
.cbody { flex: 1; min-height: 0; display: flex; flex-direction: column; border: 1px solid; border-color: #404040 #fff #fff #404040; margin-left: 1px; margin-right: 1px; background: #fff; }
.cmain { flex: 1; min-height: 0; display: flex; }
.log { flex: 1; min-width: 0; display: flex; flex-direction: column; overflow: hidden; padding-left: 2px; }
.loginner { margin-top: -6px; font: 11px/13px "Liberation Sans", sans-serif; white-space: pre; }
.loginner .b { font-size: 12px; font-weight: bold; }
.cmain .thumb { height: 6px; }
.cbody .hsb .thumb { flex: 1; }
.cbody .hsb .tr { flex: none; width: 15px; }

.status { height: 19px; flex: none; display: flex; background: #d4d0c8; border-bottom: 1px solid #6e6e6e; padding-left: 0; gap: 2px; }
.status span { border: 1px solid; border-color: #e4e2dc #dedbd4 #d4d0c8 #e0ddd6; line-height: 16px; padding: 2px 0 0 2px; }
.s1 { width: 123px; }
.s2 { width: 83px; }
.s3 { width: 51px; }
.k { width: 28px; }
.num { width: 32px; }
.off { color: #8c8c88; }
.status svg { width: 12px; height: 18px; margin: 0 3px 0 1px; }

.taskbar { height: 37px; flex: none; display: flex; align-items: center; padding: 0 13px 0 5px; background: linear-gradient(#eee, #dcdcdc); font: 13px/20px "Noto Sans", sans-serif; color: #3c4244; }
.show { width: 30px; height: 31px; display: flex; align-items: center; justify-content: center; border: 1px solid #b8b8b8; border-radius: 3px; background: #f0f0f0; }
.show svg { width: 15px; height: 15px; }
.tasks { flex: 1; min-width: 0; display: flex; gap: 4px; margin: 0 11px 0 5px; }
.task { flex: 1; min-width: 0; height: 31px; display: flex; align-items: center; gap: 5px; padding: 0 7px; border: 1px solid #b8b8b8; border-radius: 3px; background: #f0f0f0; }
.task svg { width: 22px; height: 22px; }
.task span { white-space: nowrap; }
.task.dim span { color: #8e9192; }
.task.dim svg { opacity: 0.9; }
.task.on { background: #cacaca; }
.spaces { display: flex; gap: 3px; }
.spaces button { width: 54px; height: 27px; border: 1px solid #c8c8c8; background: #dadada; border-radius: 2px; }
.spaces .on { border: 2px solid #8a8a8a; background: #f6f5f3; }
</style>
